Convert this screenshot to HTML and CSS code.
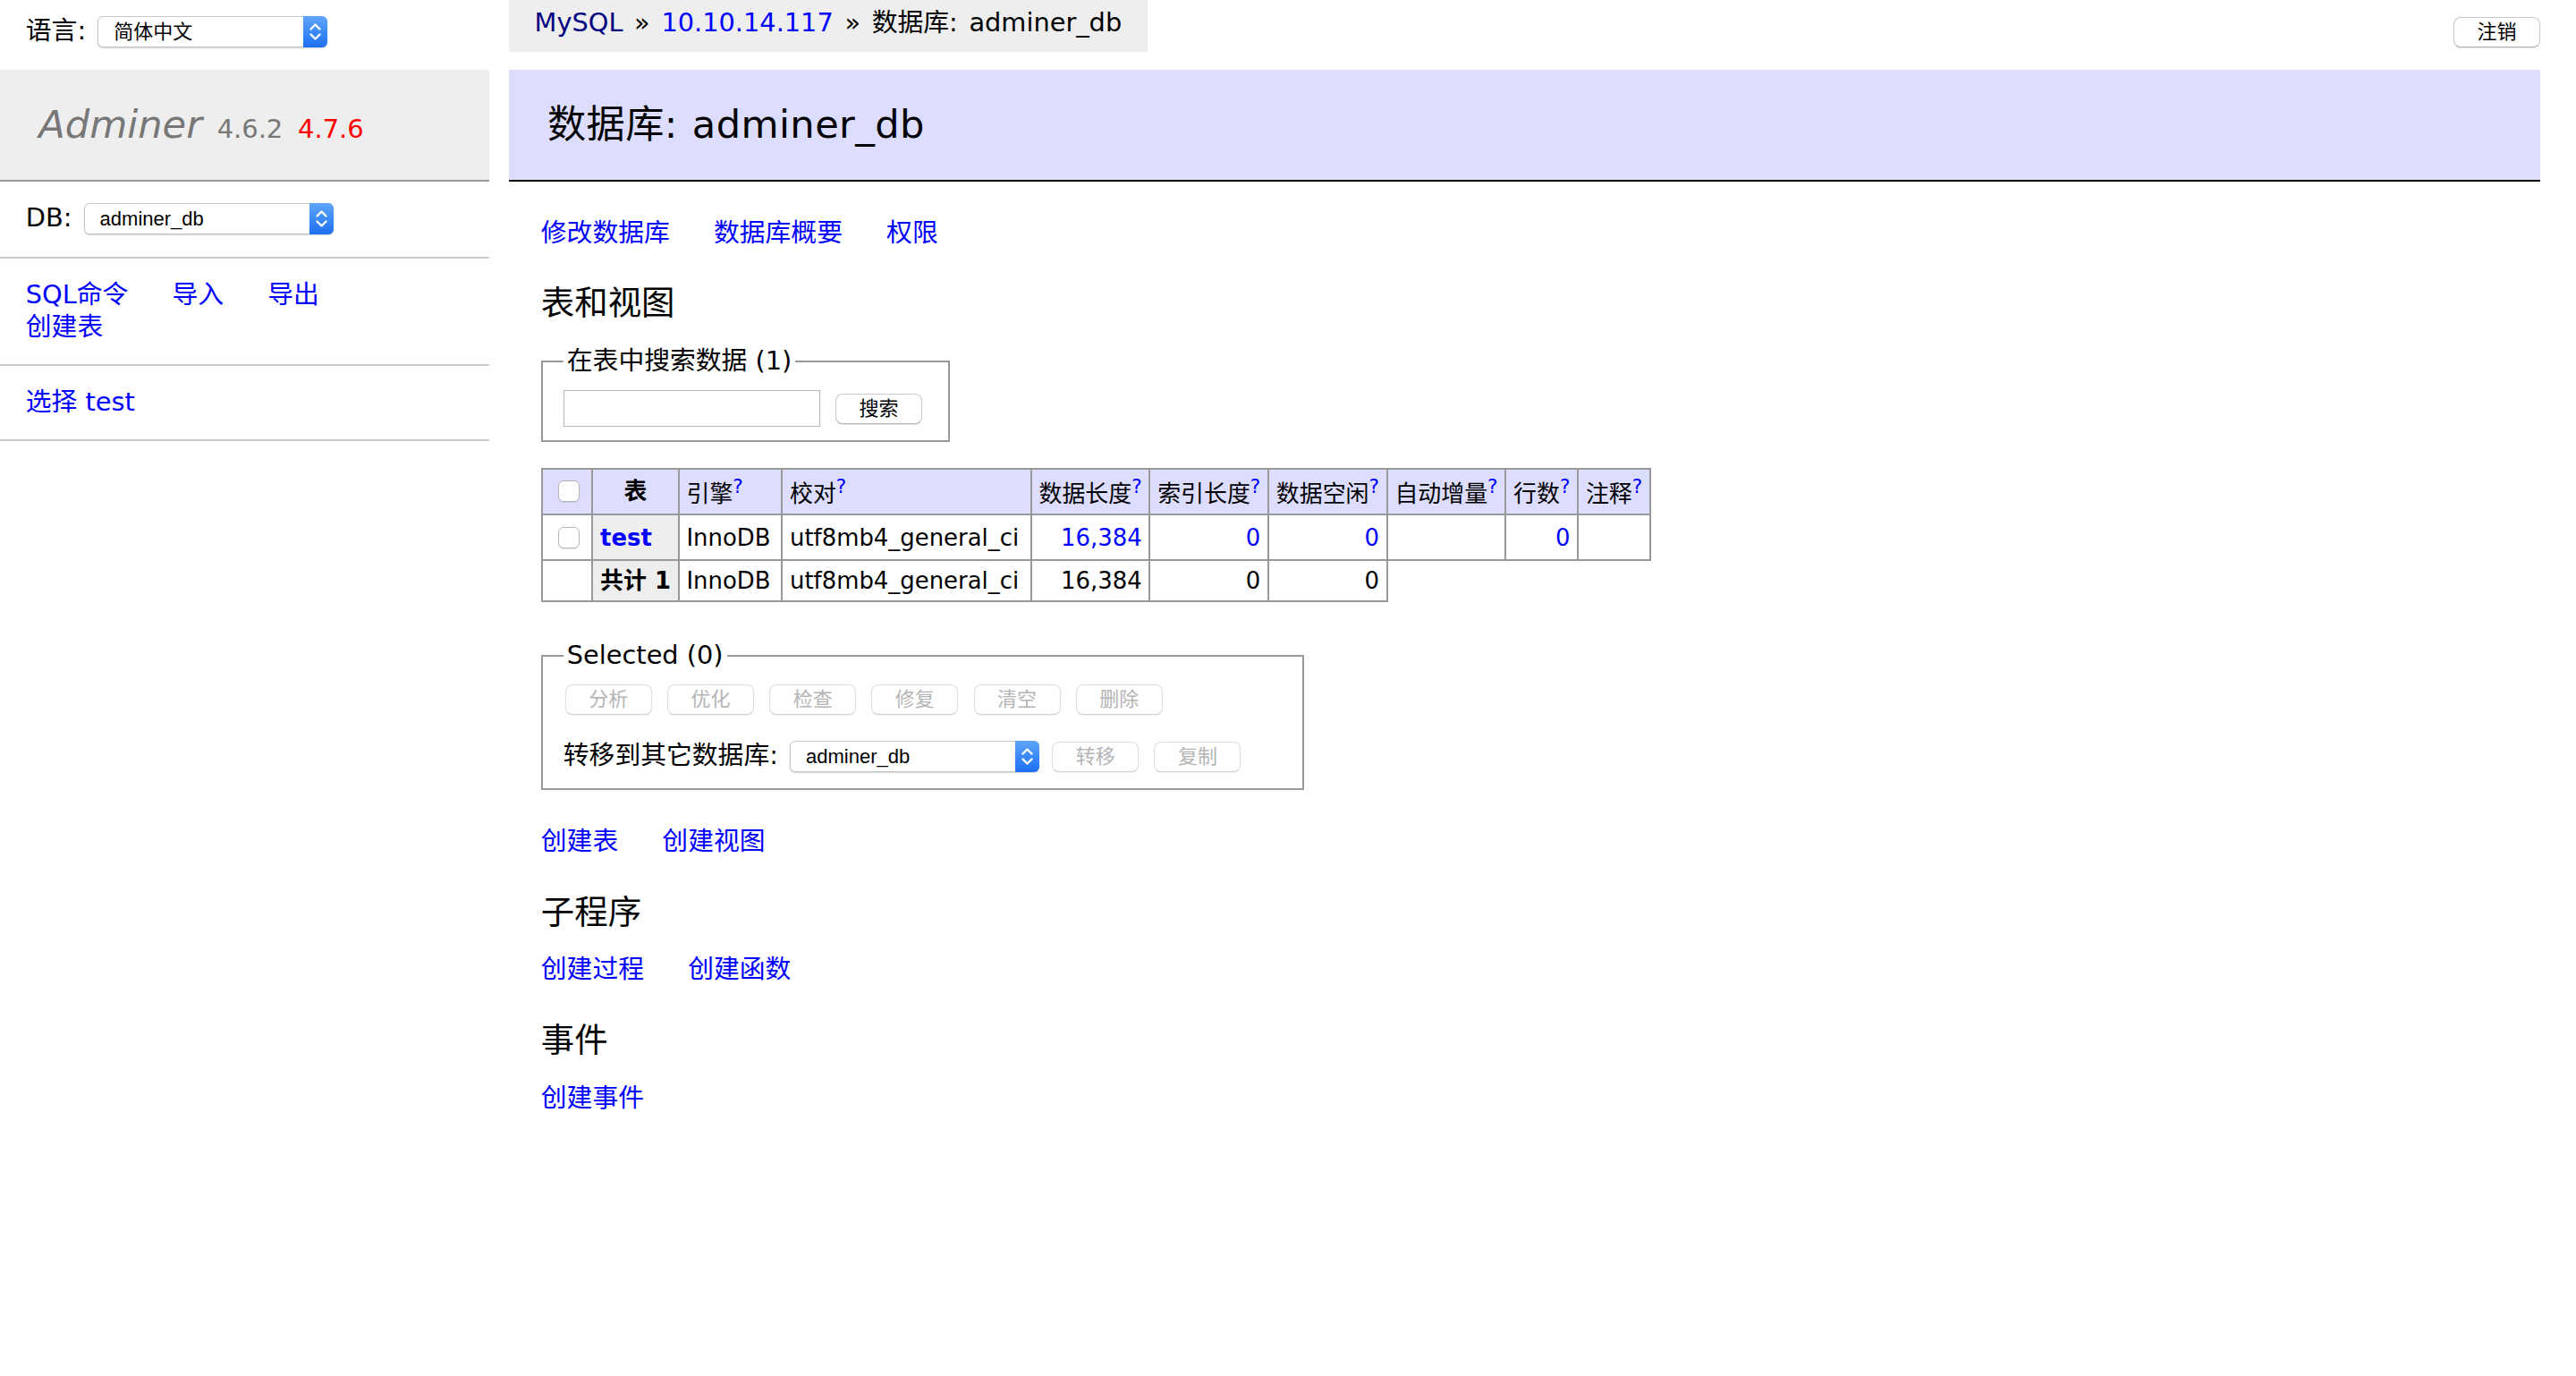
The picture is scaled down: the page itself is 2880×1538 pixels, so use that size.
FILE: index.html
```html
<!DOCTYPE html>
<html lang="zh-CN">
<head>
<meta charset="utf-8">
<title>数据库: adminer_db - Adminer</title>
<link rel="stylesheet" href="styles.css">
</head>
<body>
<div class="page">
  <div class="lang">语言: <span class="select-wrap lang-select"><select class="select"><option>简体中文</option></select><span class="select-arrow"><svg viewBox="0 0 27 35" width="27" height="35"><polyline points="8.5,14.5 13.5,9.5 18.5,14.5"/><polyline points="8.5,20.5 13.5,25.5 18.5,20.5"/></svg></span></span></div>

  <div class="topbar">
    <p class="breadcrumb"><a class="visited" href="#">MySQL</a> » <a href="#">10.10.14.117</a> » 数据库: adminer_db</p>
    <form class="logout"><button class="btn" type="button">注销</button></form>
  </div>

  <nav class="menu">
    <h1><a class="brand" href="#">Adminer</a> <span class="version">4.6.2</span> <a class="newver" href="#">4.7.6</a></h1>
    <form>
      <p class="dbs"><span title="数据库">DB</span>: <span class="select-wrap db-select"><select class="select"><option>adminer_db</option></select><span class="select-arrow"><svg viewBox="0 0 27 35" width="27" height="35"><polyline points="8.5,14.5 13.5,9.5 18.5,14.5"/><polyline points="8.5,20.5 13.5,25.5 18.5,20.5"/></svg></span></span></p>
    </form>
    <p class="links"><a href="#">SQL命令</a> <a href="#">导入</a> <a href="#">导出</a> <a href="#">创建表</a></p>
    <ul class="tables">
      <li><a href="#">选择</a> <a href="#">test</a></li>
    </ul>
  </nav>

  <main class="content">
    <h2>数据库: adminer_db</h2>
    <p class="links"><a href="#">修改数据库</a> <a href="#">数据库概要</a> <a href="#">权限</a></p>
    <h3>表和视图</h3>
    <form>
      <fieldset class="box">
        <legend>在表中搜索数据 (1)</legend>
        <div><input class="search" type="search" value=""> <button class="btn" type="button">搜索</button></div>
      </fieldset>
    </form>
    <table class="list">
      <thead>
        <tr>
          <td><input class="check" type="checkbox"></td>
          <th>表</th>
          <td class="eng">引擎<a href="#"><sup>?</sup></a></td>
          <td class="coll">校对<a href="#"><sup>?</sup></a></td>
          <td>数据长度<a href="#"><sup>?</sup></a></td>
          <td>索引长度<a href="#"><sup>?</sup></a></td>
          <td>数据空闲<a href="#"><sup>?</sup></a></td>
          <td>自动增量<a href="#"><sup>?</sup></a></td>
          <td>行数<a href="#"><sup>?</sup></a></td>
          <td>注释<a href="#"><sup>?</sup></a></td>
        </tr>
      </thead>
      <tbody>
        <tr>
          <td><input class="check" type="checkbox"></td>
          <th><a href="#">test</a></th>
          <td>InnoDB</td>
          <td>utf8mb4_general_ci</td>
          <td class="number"><a href="#">16,384</a></td>
          <td class="number"><a href="#">0</a></td>
          <td class="number"><a href="#">0</a></td>
          <td class="number"></td>
          <td class="number"><a href="#">0</a></td>
          <td></td>
        </tr>
        <tr>
          <td></td>
          <th>共计 1</th>
          <td>InnoDB</td>
          <td>utf8mb4_general_ci</td>
          <td class="number">16,384</td>
          <td class="number">0</td>
          <td class="number">0</td>
        </tr>
      </tbody>
    </table>
    <div class="footer">
      <div class="footer-inner">
        <fieldset class="box selected">
          <legend>Selected (0)</legend>
          <div><button class="btn" type="button" disabled>分析</button> <button class="btn" type="button" disabled>优化</button> <button class="btn" type="button" disabled>检查</button> <button class="btn" type="button" disabled>修复</button> <button class="btn" type="button" disabled>清空</button> <button class="btn" type="button" disabled>删除</button></div>
          <p class="move">转移到其它数据库: <span class="select-wrap db-select"><select class="select"><option>adminer_db</option></select><span class="select-arrow"><svg viewBox="0 0 27 35" width="27" height="35"><polyline points="8.5,14.5 13.5,9.5 18.5,14.5"/><polyline points="8.5,20.5 13.5,25.5 18.5,20.5"/></svg></span></span> <button class="btn" type="button" disabled>转移</button> <button class="btn" type="button" disabled>复制</button></p>
        </fieldset>
      </div>
    </div>
    <p class="links"><a href="#">创建表</a> <a href="#">创建视图</a></p>
    <h3>子程序</h3>
    <p class="links"><a href="#">创建过程</a> <a href="#">创建函数</a></p>
    <h3>事件</h3>
    <p class="links"><a href="#">创建事件</a></p>
  </main>
</div>
</body>
</html>
```

FILE: styles.css
```css
html, body {
  margin: 0;
  padding: 0;
  background: #fff;
}

body {
  color: #000;
  font: 28.8px/1.25 "DejaVu Sans", "Noto Sans CJK SC", sans-serif;
}

a {
  color: blue;
  text-decoration: none;
}

a.visited {
  color: navy;
}

.page {
  display: grid;
  grid-template-columns: 547.2px 1fr;
  grid-template-rows: 57.6px auto;
  column-gap: 21.6px;
  row-gap: 20px;
  padding-right: 40px;
}

/* language bar */
.lang {
  height: 57.6px;
  padding: 8.64px 28.8px 0;
  line-height: 51.84px;
  box-sizing: border-box;
  white-space: nowrap;
}

/* selects */
.select-wrap {
  position: relative;
  display: inline-block;
  vertical-align: middle;
  margin: 0 3px 0 4px;
  height: 35px;
  line-height: normal;
}

.lang-select { width: 257px; }
.db-select { width: 279px; }

.select {
  -webkit-appearance: none;
  appearance: none;
  display: block;
  width: 100%;
  height: 35px;
  box-sizing: border-box;
  margin: 0;
  padding: 0 32px 0 17px;
  border: 1px solid #c6c6c6;
  border-radius: 6px;
  background: #fff;
  box-shadow: 0 1px 1.5px rgba(0, 0, 0, 0.18);
  color: #000;
  font: 22px "Liberation Sans", "Noto Sans CJK SC", sans-serif;
}

.select-arrow {
  position: absolute;
  top: 0;
  right: 0;
  width: 27px;
  height: 35px;
  border-radius: 0 6px 6px 0;
  background: linear-gradient(#5ea6fb, #1d6ff4);
  pointer-events: none;
}

.select-arrow svg {
  display: block;
}

.select-arrow polyline {
  fill: none;
  stroke: #fff;
  stroke-width: 2.4;
  stroke-linecap: round;
  stroke-linejoin: round;
}

/* buttons */
.btn {
  height: 34px;
  margin: 0 6px 0 2px;
  padding: 0 25.5px;
  border: 1px solid #c9c9c9;
  border-bottom-color: #b4b4b4;
  border-radius: 8px;
  background: #fff;
  box-shadow: 0 1px 1px rgba(0, 0, 0, 0.12);
  color: #000;
  font: 22px/1 "Liberation Sans", "Noto Sans CJK SC", sans-serif;
  vertical-align: middle;
}

.btn:disabled {
  color: #b5b5b5;
  border-color: #dedede;
  border-bottom-color: #d0d0d0;
  box-shadow: 0 1px 1px rgba(0, 0, 0, 0.06);
}

/* top bar */
.topbar {
  display: flex;
  align-items: flex-start;
  justify-content: space-between;
}

.breadcrumb {
  margin: 0;
  height: 57.6px;
  padding: 0 28.8px;
  background: #eee;
  line-height: 51.84px;
  white-space: nowrap;
  word-spacing: 3.5px;
}

.logout {
  margin: 0;
  padding-top: 17px;
}

.logout .btn {
  margin: 0;
  width: 97px;
  padding: 0;
}

/* menu */
.menu h1 {
  margin: 0;
  padding: 34.56px 43.2px;
  border-bottom: 2px solid #999;
  background: #eee;
  color: #777;
  font-size: 43.2px;
  font-weight: normal;
  line-height: 1.25;
  white-space: nowrap;
  word-spacing: 3px;
}

.brand {
  color: #777;
  font-style: italic;
}

.version {
  color: #777;
  font-size: 67%;
}

.newver {
  color: red;
  font-size: 67%;
}

.menu form {
  margin: 0;
}

.menu p,
.tables {
  margin: 0;
  padding: 23.04px 28.8px;
  border-bottom: 2px solid #ccc;
}

.menu .dbs {
  padding-bottom: 25px;
}

.tables {
  list-style: none;
  white-space: nowrap;
}

.links a {
  margin-right: 40px;
  white-space: nowrap;
}

/* content */
.content {
  padding: 0 0 40px 36px;
  min-width: 0;
}

.content h2 {
  margin: 0 0 40px -36px;
  padding: 34.56px 43.2px;
  border-bottom: 2px solid #000;
  background: #ddf;
  font-size: 43.2px;
  font-weight: normal;
  line-height: 1.25;
  letter-spacing: 0.4px;
  word-spacing: 2px;
}

.content p {
  margin: 23.04px 40px 0 0;
}

.content h3 {
  margin: 37.44px 0 0;
  font-size: 37.44px;
  font-weight: normal;
  line-height: 1.25;
}

.content form {
  margin: 0;
}

.box {
  display: inline-block;
  vertical-align: top;
  margin: 23.04px 14.4px 0 0;
  padding: 14.4px 23.04px;
  border: 2px solid #999;
  min-width: 0;
}

.box legend {
  padding: 0 4px;
}

.search {
  width: 287px;
  height: 41px;
  box-sizing: border-box;
  margin: 0 6px 0 0;
  border: 1px solid #b7b7b7;
  border-radius: 0;
  padding: 0 6px;
  font: 22px "Liberation Sans", sans-serif;
  vertical-align: middle;
}

/* table */
.list {
  margin: 29px 40px 0 0;
  border-collapse: collapse;
  font-size: 25.92px;
  white-space: pre;
}

.list td,
.list th {
  border: 2px solid #999;
  padding: 5.7px 7.78px;
}

.list th {
  background: #eee;
  text-align: left;
}

.list thead th {
  text-align: center;
  padding: 5.7px 12.96px;
}

.list thead td,
.list thead th {
  background: #ddf;
}

.list .eng {
  width: 98px;
}

.list .coll {
  width: 261px;
}

.list .number {
  text-align: right;
}

.check {
  -webkit-appearance: none;
  appearance: none;
  width: 24px;
  height: 24px;
  margin: 7px 6px 7px 9px;
  border: 1px solid #b4b4b4;
  border-radius: 6px;
  background: #fff;
  box-shadow: 0 1px 1px rgba(0, 0, 0, 0.08);
  vertical-align: middle;
}

/* footer */
.footer {
  padding-top: 42px;
}

.footer-inner {
  padding-bottom: 17px;
  background: #fff;
}

.footer .box {
  margin-top: 0;
}

.box.selected {
  padding: 12px 23.04px 18px;
}

.content .move {
  margin: 27.4px 40px 0 0;
}
```
